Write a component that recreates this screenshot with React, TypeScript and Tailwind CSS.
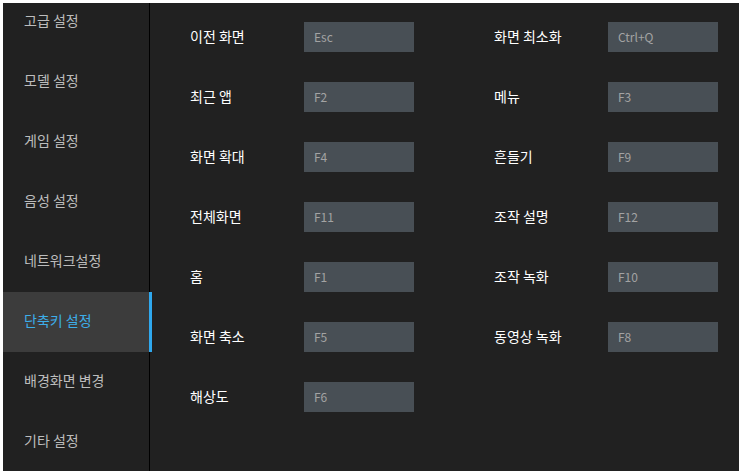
const menu = [
  "고급 설정",
  "모델 설정",
  "게임 설정",
  "음성 설정",
  "네트워크설정",
  "단축키 설정",
  "배경화면 변경",
  "기타 설정",
];

const shortcuts: [string, string][] = [
  ["이전 화면", "Esc"],
  ["화면 최소화", "Ctrl+Q"],
  ["최근 앱", "F2"],
  ["메뉴", "F3"],
  ["화면 확대", "F4"],
  ["흔들기", "F9"],
  ["전체화면", "F11"],
  ["조작 설명", "F12"],
  ["홈", "F1"],
  ["조작 녹화", "F10"],
  ["화면 축소", "F5"],
  ["동영상 녹화", "F8"],
  ["해상도", "F6"],
];

export default function App() {
  return (
    <div
      className="w-[741px] h-[474px] bg-white pt-[3px] pl-[3px] pr-[2px] pb-[3px]"
      style={{ fontFamily: '"Noto Sans CJK KR", "Noto Sans", sans-serif' }}
    >
      <div className="flex h-[468px] bg-[#212121] overflow-hidden">
        {/* Sidebar */}
        <div className="relative w-[147px] shrink-0 border-r border-black">
          <div className="-mt-[11px] flex flex-col">
            {menu.map((m, i) => {
              const active = i === 5;
              return (
                <div
                  key={m}
                  className={
                    "relative h-[60px] flex items-center pl-[21px] pb-[3px] text-[14px] " +
                    (active ? "bg-[#3c3c3c] text-[#3daee9]" : "text-[#bdbdbd]")
                  }
                >
                  {m}
                  {active && (
                    <span className="absolute right-[-3px] top-0 h-full w-[3px] bg-[#2fa8ee]" />
                  )}
                </div>
              );
            })}
          </div>
        </div>

        {/* Main */}
        <div className="flex-1 pl-[40px] pt-[19px]">
          <div className="grid grid-cols-[304px_304px] gap-y-[30px]">
            {shortcuts.map(([label, key]) => (
              <div key={label} className="flex items-center h-[30px]">
                <span className="w-[114px] text-[14px] text-white pb-[1px]">{label}</span>
                <div className="w-[110px] h-[30px] bg-[#484f55] flex items-center pl-[10px] text-[12px] text-[#a3a3a3]">
                  {key}
                </div>
              </div>
            ))}
          </div>
        </div>
      </div>
    </div>
  );
}
